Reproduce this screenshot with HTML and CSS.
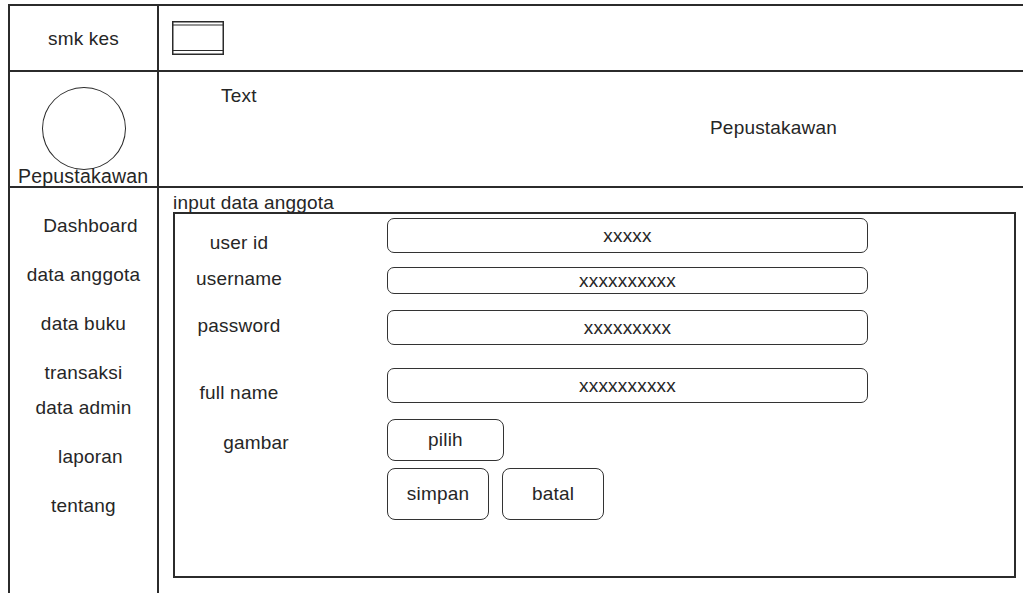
FILE: index.html
```html
<!DOCTYPE html>
<html lang="id">
<head>
<meta charset="UTF-8" />
<meta name="viewport" content="width=device-width, initial-scale=1.0" />
<title>Input Data Anggota</title>
<link rel="stylesheet" href="styles.css">
</head>
<body>
  <div class="page">
    <div class="brand">smk kes</div>
    <div class="topbar">
      <svg class="win-icon" width="52" height="34" viewBox="0 0 52 34">
        <rect x="0.75" y="0.75" width="50.5" height="32.5" fill="none" stroke="#2b2b2b" stroke-width="1.5" />
        <line x1="0.75" y1="4" x2="51.25" y2="4" stroke="#2b2b2b" stroke-width="1.2" />
        <line x1="0.75" y1="29.5" x2="51.25" y2="29.5" stroke="#2b2b2b" stroke-width="1.2" />
      </svg>
    </div>

    <div class="profile">
      <div class="avatar"></div>
      <div class="profile-name">Pepustakawan</div>
    </div>
    <div class="heading">
      <div class="heading-title">Text</div>
      <div class="heading-role">Pepustakawan</div>
    </div>

    <nav class="sidebar">
      <a class="nav-item shift">Dashboard</a>
      <a class="nav-item">data anggota</a>
      <a class="nav-item">data buku</a>
      <a class="nav-item">transaksi</a>
      <a class="nav-item tight">data admin</a>
      <a class="nav-item shift">laporan</a>
      <a class="nav-item">tentang</a>
    </nav>

    <main class="content">
      <div class="form-title">input data anggota</div>
      <form class="form-box">
        <div class="row row-id">
          <label class="label">user id</label>
          <div class="field">xxxxx</div>
        </div>
        <div class="row row-user">
          <label class="label">username</label>
          <div class="field">xxxxxxxxxx</div>
        </div>
        <div class="row row-pass">
          <label class="label">password</label>
          <div class="field">xxxxxxxxx</div>
        </div>
        <div class="row row-name">
          <label class="label">full name</label>
          <div class="field">xxxxxxxxxx</div>
        </div>
        <div class="row row-pic">
          <label class="label indent">gambar</label>
          <button type="button" class="btn btn-pick">pilih</button>
        </div>
        <div class="row row-actions">
          <span class="label"></span>
          <div class="actions">
            <button type="submit" class="btn btn-big">simpan</button>
            <button type="button" class="btn btn-big">batal</button>
          </div>
        </div>
      </form>
    </main>
  </div>
</body>
</html>
```

FILE: styles.css
```css
html, body {
  margin: 0;
  padding: 0;
}

* {
  box-sizing: border-box;
}

body {
  font-family: "Liberation Sans", Arial, sans-serif;
  font-size: 19px;
  line-height: 22px;
  letter-spacing: 0.2px;
  color: #262626;
  background-color: #fff;
}

.page {
  margin: 4px 0 0 8px;
  height: 589px;
  border-top: 2px solid #2b2b2b;
  border-left: 2px solid #2b2b2b;
  display: grid;
  grid-template-columns: 149px 1fr;
  grid-template-rows: 66px 116px 1fr;
}

.brand {
  border-right: 2px solid #2b2b2b;
  border-bottom: 2px solid #2b2b2b;
  display: flex;
  align-items: center;
  justify-content: center;
  padding-top: 2px;
}

.topbar {
  border-bottom: 2px solid #2b2b2b;
  display: flex;
  align-items: center;
  padding-left: 13px;
  padding-bottom: 1px;
}

.win-icon {
  display: block;
}

.profile {
  border-right: 2px solid #2b2b2b;
  border-bottom: 2px solid #2b2b2b;
  display: flex;
  flex-direction: column;
  align-items: center;
}

.avatar {
  margin-top: 15px;
  width: 84px;
  height: 84px;
  border: 1.5px solid #2b2b2b;
  border-radius: 50%;
}

.profile-name {
  align-self: flex-start;
  margin-top: -3px;
  padding-left: 8px;
  line-height: 19px;
  font-size: 19.5px;
}

.heading {
  border-bottom: 2px solid #2b2b2b;
  padding: 13px 0 0 62px;
}

.heading-role {
  margin: 10px 0 0 489px;
}

.sidebar {
  border-right: 2px solid #2b2b2b;
  display: flex;
  flex-direction: column;
  align-items: center;
  padding-top: 27px;
}

.nav-item {
  margin-bottom: 27px;
  white-space: nowrap;
}

.nav-item.shift {
  padding-left: 14px;
}

.nav-item + .tight {
  margin-top: -14px;
}

.content {
  padding: 4px 0 0 14px;
}

.form-title {
  margin-bottom: -2px;
}

.form-box {
  width: 843px;
  height: 366px;
  border: 2px solid #2b2b2b;
  padding-top: 4px;
  margin: 0;
}

.row {
  display: flex;
  align-items: flex-start;
}

.label {
  width: 128px;
  margin-right: 84px;
  text-align: center;
  flex-shrink: 0;
}

.label.indent {
  padding-left: 34px;
}

.field {
  width: 481px;
  height: 35px;
  border: 1.5px solid #333;
  border-radius: 7px;
  display: flex;
  align-items: center;
  justify-content: center;
  padding-top: 1px;
}

.row-id .label { padding-top: 14px; }

.row-user { margin-top: 13px; }
.row-user .field { height: 27px; }
.row-user .label { padding-top: 1px; }

.row-pass { margin-top: 16px; }
.row-pass .label { padding-top: 5px; }

.row-name { margin-top: 23px; }
.row-name .label { padding-top: 14px; }

.row-pic { margin-top: 15px; }
.row-pic .label { padding-top: 13px; }

.row-actions { margin-top: 7px; }

.btn {
  font-family: inherit;
  font-size: 19px;
  letter-spacing: 0.2px;
  color: #262626;
  background-color: #fff;
  border: 1.5px solid #333;
  border-radius: 8px;
  padding: 0;
  cursor: pointer;
}

.btn-pick {
  width: 117px;
  height: 42px;
}

.actions {
  display: flex;
  gap: 13px;
}

.btn-big {
  width: 102px;
  height: 52px;
}
```
